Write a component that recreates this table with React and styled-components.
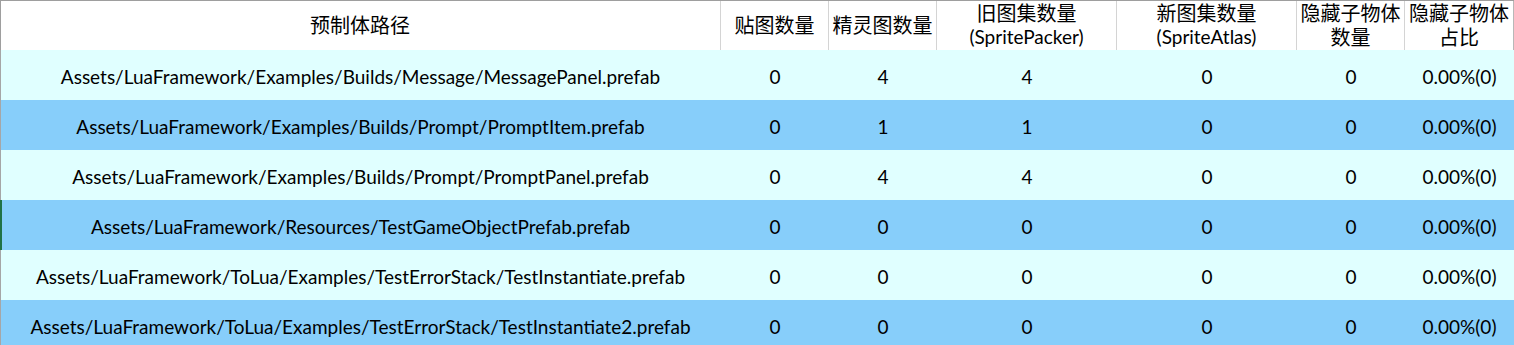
import React from "react";
import styled, { createGlobalStyle } from "styled-components";

const Global = createGlobalStyle`
  html, body { margin: 0; padding: 0; background: #ffffff; }
  body { font-family: "Lato", "Noto Sans CJK SC", sans-serif; color: #000; }
`;

const COLS = "721px 108px 108px 180px 180px 108px 109px";

const Sheet = styled.div`
  width: 1514px;
  display: flex;
  flex-direction: column;
`;

const HeaderRow = styled.div`
  display: grid;
  grid-template-columns: ${COLS};
  height: 50px;
  box-sizing: border-box;
  border-top: 1px solid #9e9e9e;
  background: #ffffff;
  box-shadow: inset 1px 0 0 #9e9e9e;
`;

const HeaderCell = styled.div`
  display: flex;
  flex-direction: column;
  align-items: center;
  justify-content: center;
  border-right: 1px solid ${(p) => (p.$last ? "#b8b8b8" : "#d4d4d4")};
  box-sizing: border-box;
  padding-bottom: 1px;
  white-space: nowrap;
`;

const CjkLine = styled.span`
  font-family: "Noto Sans CJK SC", sans-serif;
  font-size: 20px;
  line-height: 24px;
`;

const LatinLine = styled.span`
  font-family: "Lato", sans-serif;
  font-size: 19px;
  line-height: 24px;
`;

const DataRow = styled.div`
  display: grid;
  grid-template-columns: ${COLS};
  height: 50px;
  background: ${(p) => (p.$dark ? "#87cefa" : "#e0ffff")};
  box-shadow: inset ${(p) => (p.$selected ? "2px 0 0 #217346" : "1px 0 0 #a6a6a6")};
`;

const DataCell = styled.div`
  display: flex;
  align-items: center;
  justify-content: center;
  font-family: "Lato", "Noto Sans CJK SC", sans-serif;
  font-size: 19px;
  white-space: nowrap;
  padding-top: 2px;
  box-sizing: border-box;
`;

const headers = [
  ["预制体路径"],
  ["贴图数量"],
  ["精灵图数量"],
  ["旧图集数量", "(SpritePacker)"],
  ["新图集数量", "(SpriteAtlas)"],
  ["隐藏子物体", "数量", true],
  ["隐藏子物体", "占比", true],
];

const rows = [
  ["Assets/LuaFramework/Examples/Builds/Message/MessagePanel.prefab", 0, 4, 4, 0, 0, "0.00%(0)"],
  ["Assets/LuaFramework/Examples/Builds/Prompt/PromptItem.prefab", 0, 1, 1, 0, 0, "0.00%(0)"],
  ["Assets/LuaFramework/Examples/Builds/Prompt/PromptPanel.prefab", 0, 4, 4, 0, 0, "0.00%(0)"],
  ["Assets/LuaFramework/Resources/TestGameObjectPrefab.prefab", 0, 0, 0, 0, 0, "0.00%(0)"],
  ["Assets/LuaFramework/ToLua/Examples/TestErrorStack/TestInstantiate.prefab", 0, 0, 0, 0, 0, "0.00%(0)"],
  ["Assets/LuaFramework/ToLua/Examples/TestErrorStack/TestInstantiate2.prefab", 0, 0, 0, 0, 0, "0.00%(0)"],
];

export default function App() {
  return (
    <Sheet>
      <Global />
      <HeaderRow>
        {headers.map(([a, b, cjk], i) => (
          <HeaderCell key={i} $last={i === headers.length - 1}>
            <CjkLine>{a}</CjkLine>
            {b && (cjk ? <CjkLine>{b}</CjkLine> : <LatinLine>{b}</LatinLine>)}
          </HeaderCell>
        ))}
      </HeaderRow>
      {rows.map((r, i) => (
        <DataRow key={i} $dark={i % 2 === 1} $selected={i === 3}>
          {r.map((v, j) => (
            <DataCell key={j}>{v}</DataCell>
          ))}
        </DataRow>
      ))}
    </Sheet>
  );
}
